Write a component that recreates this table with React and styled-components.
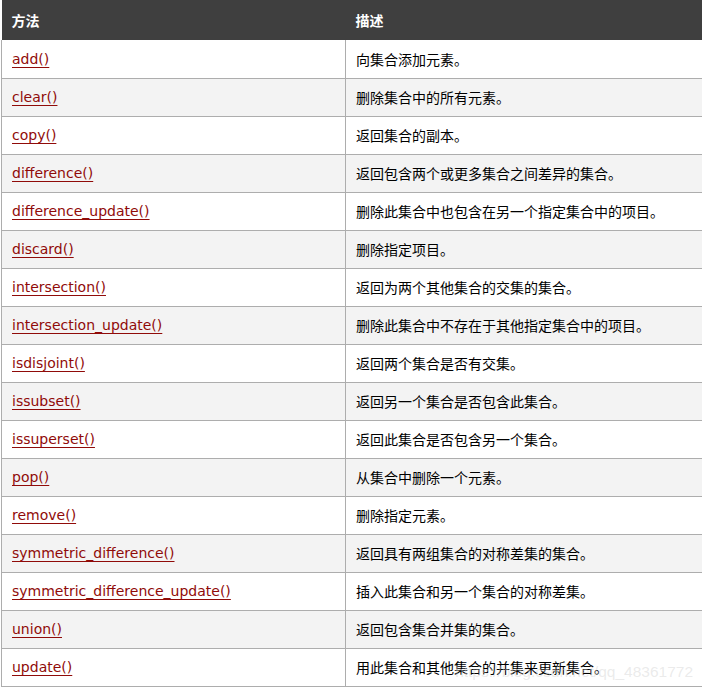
import React from "react";
import styled, { createGlobalStyle } from "styled-components";

const Global = createGlobalStyle`
  html, body { margin: 0; padding: 0; background: #fff; }
  body { font-family: "DejaVu Sans", "Noto Sans CJK SC", sans-serif; }
`;

const Wrap = styled.div`
  position: relative;
  width: 702px;
  height: 688px;
  overflow: hidden;
  padding-left: 1px;
  box-sizing: border-box;
`;

const Table = styled.table`
  border-collapse: collapse;
  width: 710px;
  table-layout: fixed;
  font-size: 14px;
  color: #000;
`;

const HeadCell = styled.th`
  background: #3f3f3f;
  color: #fff;
  font-weight: bold;
  text-align: left;
  height: 40px;
  padding: 0 0 0 10px;
  box-sizing: border-box;
  width: ${(p) => p.$w || "auto"};
  border: none;
`;

const Row = styled.tr`
  background: ${(p) => (p.$alt ? "#f3f3f3" : "#fff")};
`;

const Cell = styled.td`
  height: 38px;
  padding: 0 0 0 10px;
  border: 1px solid #adadad;
  border-top: none;
  box-sizing: border-box;
  white-space: nowrap;
`;

const Link = styled.a`
  color: #900b09;
  font-size: 14px;
  text-decoration: underline;
  text-underline-offset: 3px;
`;

const Watermark = styled.div`
  position: absolute;
  right: 9px;
  bottom: 7px;
  font-family: "Liberation Sans", Arial, sans-serif;
  font-size: 15.5px;
  color: rgba(210, 210, 210, 0.45);
  pointer-events: none;
  white-space: nowrap;
`;

const rows = [
  ["add()", "向集合添加元素。"],
  ["clear()", "删除集合中的所有元素。"],
  ["copy()", "返回集合的副本。"],
  ["difference()", "返回包含两个或更多集合之间差异的集合。"],
  ["difference_update()", "删除此集合中也包含在另一个指定集合中的项目。"],
  ["discard()", "删除指定项目。"],
  ["intersection()", "返回为两个其他集合的交集的集合。"],
  ["intersection_update()", "删除此集合中不存在于其他指定集合中的项目。"],
  ["isdisjoint()", "返回两个集合是否有交集。"],
  ["issubset()", "返回另一个集合是否包含此集合。"],
  ["issuperset()", "返回此集合是否包含另一个集合。"],
  ["pop()", "从集合中删除一个元素。"],
  ["remove()", "删除指定元素。"],
  ["symmetric_difference()", "返回具有两组集合的对称差集的集合。"],
  ["symmetric_difference_update()", "插入此集合和另一个集合的对称差集。"],
  ["union()", "返回包含集合并集的集合。"],
  ["update()", "用此集合和其他集合的并集来更新集合。"],
];

export default function App() {
  return (
    <>
      <Global />
      <Wrap>
        <Table>
          <thead>
            <tr>
              <HeadCell $w="344px">方法</HeadCell>
              <HeadCell>描述</HeadCell>
            </tr>
          </thead>
          <tbody>
            {rows.map(([m, d], i) => (
              <Row key={m} $alt={i % 2 === 1}>
                <Cell>
                  <Link href="#">{m}</Link>
                </Cell>
                <Cell>{d}</Cell>
              </Row>
            ))}
          </tbody>
        </Table>
        <Watermark>https://blog.csdn.net/qq_48361772</Watermark>
      </Wrap>
    </>
  );
}
